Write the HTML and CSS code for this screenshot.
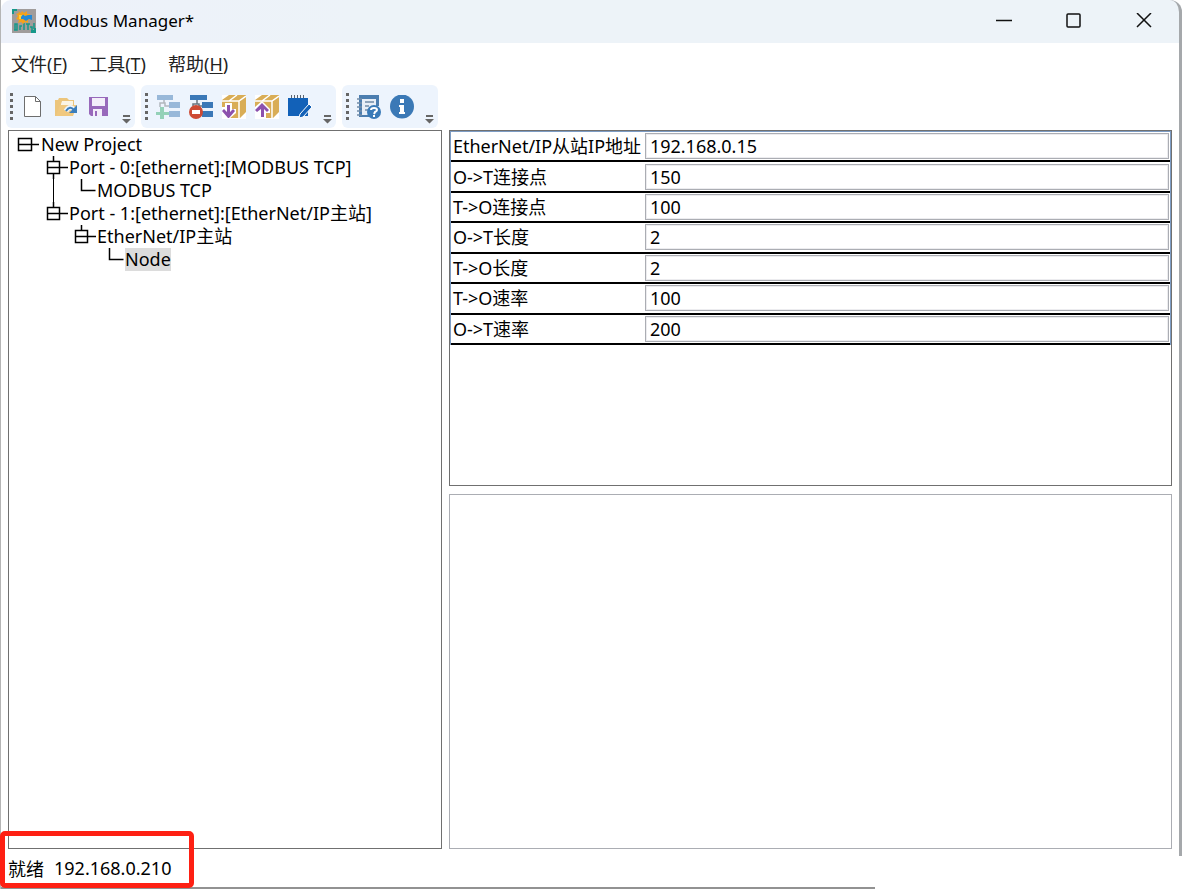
FILE: index.html
```
<!DOCTYPE html>
<html lang="zh-CN">
<head>
    <meta charset="UTF-8">
    <meta name="viewport" content="width=device-width, initial-scale=1.0">
    <title>Modbus Manager</title>
    <link rel="stylesheet" href="styles.css">
</head>
<body>

<div class="window">
    <header class="titlebar">
        <svg class="app-icon" width="24" height="24" viewBox="0 0 24 24">
            <path fill="#a09c9b" d="M0 0h24v24H0z"/>
            <path fill="#16988a" d="M0 0h5v2H2v3H0zM24 24h-5v-3h3v-2h2z"/>
            <path fill="none" stroke="#16988a" stroke-width="1.500" d="M3 21v-6h2v6H2M8 21v-4h2M12 14v7M14 15h4M16 15v6M18 18h2v3M22 14v6"/>
            <path fill="#f6a21a" d="M6 2l3 2 1-2 2 2 3-2v3h3l-1 3 2 2-3 1v3l-3-1-2 2-2-2-3 1 1-3-3-1 2-3-2-2 3-1z"/>
            <path fill="#ffd23c" d="M7 6h6v4H7z"/>
            <path fill="#2489d5" d="M9 8q2-4 4-1l3-1h4v5l-3-1-3 2-3-2H9z"/>
        </svg>
        <h1>Modbus Manager*</h1>
        <div class="window-buttons">
            <button type="button" aria-label="最小化"><svg width="16" height="16" viewBox="0 0 16 16"><path d="M0 7.500h16"/></svg></button>
            <button type="button" aria-label="最大化"><svg width="16" height="16" viewBox="0 0 16 16"><rect x="1" y="1" width="13" height="13" rx="1"/></svg></button>
            <button type="button" aria-label="关闭"><svg width="16" height="16" viewBox="0 0 16 16"><path d="M1 0l14 14M15 0L1 14"/></svg></button>
        </div>
    </header>

    <nav class="menubar">
        <a href="#file">文件(<u>F</u>)</a>
        <a href="#tools">工具(<u>T</u>)</a>
        <a href="#help">帮助(<u>H</u>)</a>
    </nav>

    <div class="toolbars">
        <div class="toolbar">
            <span class="grip"></span>
            <button type="button" aria-label="新建">
                <svg width="24" height="24" viewBox="0 0 24 24"><path fill="#fff" stroke="#6d6d6d" d="M3.500 1.500h11l5 5v15h-16z" /><path fill="none" stroke="#6d6d6d" d="M14.500 1.500v5h5"/></svg>
            </button>
            <button type="button" aria-label="打开">
                <svg width="24" height="24" viewBox="0 0 24 24">
                    <path fill="#ecc57c" d="M1 5h3l1-2h8l2 2h5v5h-2V7H8l-4 11-1 3H1z"/>
                    <path fill="#fbf4e4" d="M8 6h11v4H7z"/>
                    <path fill="#f0c87f" d="M6 10h17l-4 11H2z"/>
                    <path fill="none" stroke="#edf4fd" stroke-width="5" d="M12 16q4-7 9 0"/>
                    <path fill="none" stroke="#3c7ebb" stroke-width="2" d="M12 16q4-6 8-1"/>
                    <path fill="#3c7ebb" d="M23 10v8h-8z"/>
                </svg>
            </button>
            <button type="button" aria-label="保存">
                <svg width="24" height="24" viewBox="0 0 24 24">
                    <path fill="#9869bb" d="M2 2h19v19H4l-2-2z"/>
                    <path fill="#f3eefa" d="M5 3h13v8H5zM6 14h11v7H6z"/>
                    <path fill="#9869bb" d="M8 16h2v5H8zM15 14h2v7h-2z"/>
                </svg>
            </button>
            <button type="button" class="overflow" aria-label="更多"><svg width="9" height="10" viewBox="0 0 9 10"><path fill="#666" d="M1 1h7v2H1zM0 5h9L4.500 9.500z"/></svg></button>
        </div>

        <div class="toolbar">
            <span class="grip"></span>
            <button type="button" aria-label="添加节点">
                <svg width="24" height="24" viewBox="0 0 24 24">
                    <path fill="#98b8d9" d="M1 0h16v5H1zM13 7h11v6H13zM13 16h11v6H13z"/>
                    <path fill="none" stroke="#b1b7bd" stroke-width="1.500" d="M8 5v3M4 12V8h5v3h4M10 18h3"/>
                    <path fill="#94d1b8" d="M4 12h4v5h5v3H8v4H4v-4H0v-3h4z"/>
                </svg>
            </button>
            <button type="button" aria-label="删除节点">
                <svg width="24" height="24" viewBox="0 0 24 24">
                    <path fill="#3b78b7" d="M1 0h17v5H1zM13 7h11v6H13zM13 16h11v6H13z"/>
                    <path fill="none" stroke="#69747f" stroke-width="1.500" d="M8 5v4M4 11V9h6v2h3"/>
                    <circle cx="7" cy="17" r="7" fill="#cd4a34"/>
                    <path fill="#fff" d="M3 15h8v4H3z"/>
                </svg>
            </button>
            <button type="button" aria-label="下载">
                <svg width="24" height="24" viewBox="0 0 24 24">
                    <path fill="#fff" d="M0 0h24v24H0z"/>
                    <path fill="#d9ad56" d="M0 5l7-5h17v17l-6 6H8V12H0z"/>
                    <path fill="none" stroke="#fff" stroke-width="1.500" d="M7 6l8-6M0 6h17l7-5M17 6v17"/>
                    <path fill="#fff" d="M3 8h7v6h4v4l-7 6-7-6v-4h3z"/>
                    <path fill="#8c51ad" d="M5 10h3v7l3-3 2 2-6 7h-1l-6-7 2-2 3 3z"/>
                </svg>
            </button>
            <button type="button" aria-label="上传">
                <svg width="24" height="24" viewBox="0 0 24 24">
                    <path fill="#fff" d="M0 0h24v24H0z"/>
                    <path fill="#d9ad56" d="M0 5l7-5h17v17l-6 6H8V12H0z"/>
                    <path fill="none" stroke="#fff" stroke-width="1.500" d="M7 6l8-6M0 6h17l7-5M17 6v17"/>
                    <path fill="#fff" d="M7 6l8 8v4h-4v6H4v-6H0v-6z"/>
                    <path fill="#8c51ad" d="M7 8l7 7-2 2-3-3v8H6v-8l-4 3-2-2z"/>
                </svg>
            </button>
            <button type="button" aria-label="编辑">
                <svg width="24" height="24" viewBox="0 0 24 24">
                    <path fill="#1261b8" d="M0 3h20v18H0z"/>
                    <path stroke="#5b6470" stroke-width="3" stroke-dasharray="1 2" d="M3 1.500h15"/>
                    <path fill="#1261b8" stroke="#fff" d="M11 23l1-4L21 9l3 3-9 10z"/>
                </svg>
            </button>
            <button type="button" class="overflow" aria-label="更多"><svg width="9" height="10" viewBox="0 0 9 10"><path fill="#666" d="M1 1h7v2H1zM0 5h9L4.500 9.500z"/></svg></button>
        </div>

        <div class="toolbar">
            <span class="grip"></span>
            <button type="button" aria-label="帮助文档">
                <svg width="24" height="24" viewBox="0 0 24 24">
                    <path fill="#4c7eb0" d="M2 0h20v11h-3V4H5v16h7v2H2z"/>
                    <path fill="#e7eef7" d="M5 4h14v6l-7 4v6H5z"/>
                    <path stroke="#718ca8" stroke-width="1.500" d="M0 4h5M0 8h5M0 12h5M0 16h5M0 20h5M8 7h9M8 11h4M8 15h3"/>
                    <circle cx="17" cy="17" r="7" fill="#397ab8"/>
                    <path fill="none" stroke="#fff" stroke-width="2" d="M14 15q0-2 3-2t3 2q0 1-2 2l-1 2M17 20v2"/>
                </svg>
            </button>
            <button type="button" aria-label="关于">
                <svg width="24" height="24" viewBox="0 0 24 24"><circle cx="12" cy="11.500" r="12" fill="#3b79b6"/><path fill="#fff" d="M10 4h4v4h-4zM9 10h5v7h1v2H9v-2h1v-5H9z"/></svg>
            </button>
            <button type="button" class="overflow" aria-label="更多"><svg width="9" height="10" viewBox="0 0 9 10"><path fill="#666" d="M1 1h7v2H1zM0 5h9L4.500 9.500z"/></svg></button>
        </div>
    </div>

    <main class="workspace">
        <section class="panel tree-panel">
            <ul class="tree">
                <li>
                    <div class="node"><svg width="28" height="23" viewBox="0 0 28 23"><path d="M5.500 5.500h13v12h-13zM5 11.500h21"/></svg><span>New Project</span></div>
                    <ul>
                        <li>
                            <div class="node"><svg width="28" height="23" viewBox="0 0 28 23"><path d="M6.500 5.500h12v12h-12zM6 11.500h21M12.500 0v6M12.500 17v6"/></svg><span>Port - 0:[ethernet]:[MODBUS TCP]</span></div>
                            <ul class="linked">
                                <li><div class="node"><svg width="28" height="23" viewBox="0 0 28 23"><path d="M12.500 0v11.500h14"/></svg><span>MODBUS TCP</span></div></li>
                            </ul>
                        </li>
                        <li>
                            <div class="node"><svg width="28" height="23" viewBox="0 0 28 23"><path d="M6.500 5.500h12v12h-12zM6 11.500h21M12.500 0v6"/></svg><span>Port - 1:[ethernet]:[EtherNet/IP主站]</span></div>
                            <ul>
                                <li>
                                    <div class="node"><svg width="28" height="23" viewBox="0 0 28 23"><path d="M6.500 5.500h12v12h-12zM6 11.500h21M12.500 0v6"/></svg><span>EtherNet/IP主站</span></div>
                                    <ul>
                                        <li><div class="node"><svg width="28" height="23" viewBox="0 0 28 23"><path d="M12.500 0v11.500h14"/></svg><span class="selected">Node</span></div></li>
                                    </ul>
                                </li>
                            </ul>
                        </li>
                    </ul>
                </li>
            </ul>
        </section>

        <section class="panel props-panel">
            <table class="props">
                <tr><th><label for="slaveIp">EtherNet/IP从站IP地址</label></th><td><input type="text" id="slaveIp" value="192.168.0.15"></td></tr>
                <tr><th><label for="otPoint">O-&gt;T连接点</label></th><td><input type="text" id="otPoint" value="150"></td></tr>
                <tr><th><label for="toPoint">T-&gt;O连接点</label></th><td><input type="text" id="toPoint" value="100"></td></tr>
                <tr><th><label for="otLength">O-&gt;T长度</label></th><td><input type="text" id="otLength" value="2"></td></tr>
                <tr><th><label for="toLength">T-&gt;O长度</label></th><td><input type="text" id="toLength" value="2"></td></tr>
                <tr><th><label for="toRate">T-&gt;O速率</label></th><td><input type="text" id="toRate" value="100"></td></tr>
                <tr><th><label for="otRate">O-&gt;T速率</label></th><td><input type="text" id="otRate" value="200"></td></tr>
            </table>
        </section>

        <textarea class="output" aria-label="输出" readonly></textarea>
    </main>

    <footer class="statusbar">
        <span>就绪</span>
        <span>192.168.0.210</span>
        <div class="highlight"></div>
    </footer>
</div>

</body>
</html>
```
FILE: styles.css
```
* {
    box-sizing: border-box;
}
body {
    margin: 0;
    background-color: #fff;
    font-family: "Noto Sans", "Noto Sans CJK SC", sans-serif;
    font-size: 18px;
    color: #000;
}
button {
    display: flex;
    align-items: center;
    justify-content: center;
    padding: 0;
    border: none;
    background: none;
}
.window {
    display: flex;
    flex-direction: column;
    height: 100vh;
    position: relative;
    border-left: 1px solid #b5b5b5;
}
/* window edges */
.window::before {
    content: "";
    position: absolute;
    top: 0;
    right: 0;
    bottom: 33px;
    width: 12px;
    border-right: 3px solid #a5a8ab;
    border-top-right-radius: 12px;
    pointer-events: none;
}
.window::after {
    content: "";
    position: absolute;
    left: 0;
    bottom: 0;
    width: 74%;
    height: 2px;
    background-color: #929292;
}
.titlebar {
    display: flex;
    align-items: center;
    flex: none;
    height: 43px;
    padding: 0 3px 2px 11px;
    background: linear-gradient(to right, #edf1fa, #edf3f8 30%);
    border-radius: 10px 12px 0 0;
}
.titlebar h1 {
    margin: 0 auto 0 7px;
    font-size: 17px;
    font-weight: normal;
    line-height: 22px;
}
.window-buttons {
    display: flex;
}
.window-buttons button {
    width: 70px;
    height: 40px;
}
.window-buttons svg {
    fill: none;
    stroke: #111;
    stroke-width: 1.500;
}
.menubar {
    display: flex;
    align-items: center;
    flex: none;
    gap: 22px;
    height: 42px;
    padding: 0 0 3px 10px;
}
.menubar a {
    color: #222;
    text-decoration: none;
}
.menubar u {
    text-underline-offset: 2px;
}
.toolbars {
    display: flex;
    flex: none;
    gap: 6px;
    height: 45px;
    padding: 0 0 2px 5px;
}
.toolbar {
    display: flex;
    align-items: center;
    gap: 9px;
    padding: 0 4px;
    background-color: #edf4fd;
    border-radius: 6px;
}
.grip {
    width: 3px;
    height: 27px;
    margin-right: -1px;
    background: repeating-linear-gradient(#666 0 3px, transparent 3px 6px);
}
.overflow {
    align-self: flex-end;
    margin: 0 0 4px 2px;
}
.workspace {
    display: grid;
    flex: 1;
    grid-template-columns: 3fr 5fr;
    grid-template-rows: 1fr 1fr;
    gap: 8px 7px;
    min-height: 0;
    padding: 0 10px 0 7px;
}
.panel {
    border: 1px solid #707070;
    min-width: 0;
}
.tree-panel {
    grid-row: 1 / 3;
    padding: 2px 4px;
}
.tree, .tree ul {
    margin: 0;
    padding: 0;
    list-style: none;
}
.tree ul {
    padding-left: 28px;
}
.tree ul.linked {
    margin-left: 12px;
    padding-left: 15px;
    border-left: 1px solid #000;
}
.node {
    display: flex;
    height: 23px;
    line-height: 23px;
    white-space: nowrap;
}
.node svg {
    flex: none;
    fill: none;
    stroke: #000;
    stroke-width: 1.500;
}
.selected {
    background-color: #dcdcdc;
}
.props {
    width: 100%;
    height: 214px;
    border: 1px solid #7d9cc4;
    border-bottom: none;
    border-collapse: separate;
    border-spacing: 0;
}
.props th, .props td {
    padding: 0;
    border-bottom: 2px solid #000;
}
.props th {
    width: 194px;
    padding-left: 2px;
    font-weight: normal;
    line-height: 24px;
    text-align: left;
    white-space: nowrap;
}
.props td {
    padding-right: 1px;
}
.props input {
    display: block;
    width: 100%;
    height: 26px;
    padding: 0 4px;
    border: 1px solid #abadb3;
    font: inherit;
    box-shadow: inset 0 0 0 1px #ececef;
}
.output {
    resize: none;
    border: 1px solid #abadb3;
    background-color: #fff;
    outline: none;
}
.statusbar {
    display: flex;
    align-items: center;
    flex: none;
    gap: 10px;
    height: 40px;
    padding: 0 0 2px 7px;
    position: relative;
}
/* red frame drawn over the status text */
.highlight {
    position: absolute;
    left: -1px;
    bottom: 1px;
    width: 194px;
    height: 57px;
    border: 5px solid #fe2013;
    border-radius: 5px;
    z-index: 1;
}
```
